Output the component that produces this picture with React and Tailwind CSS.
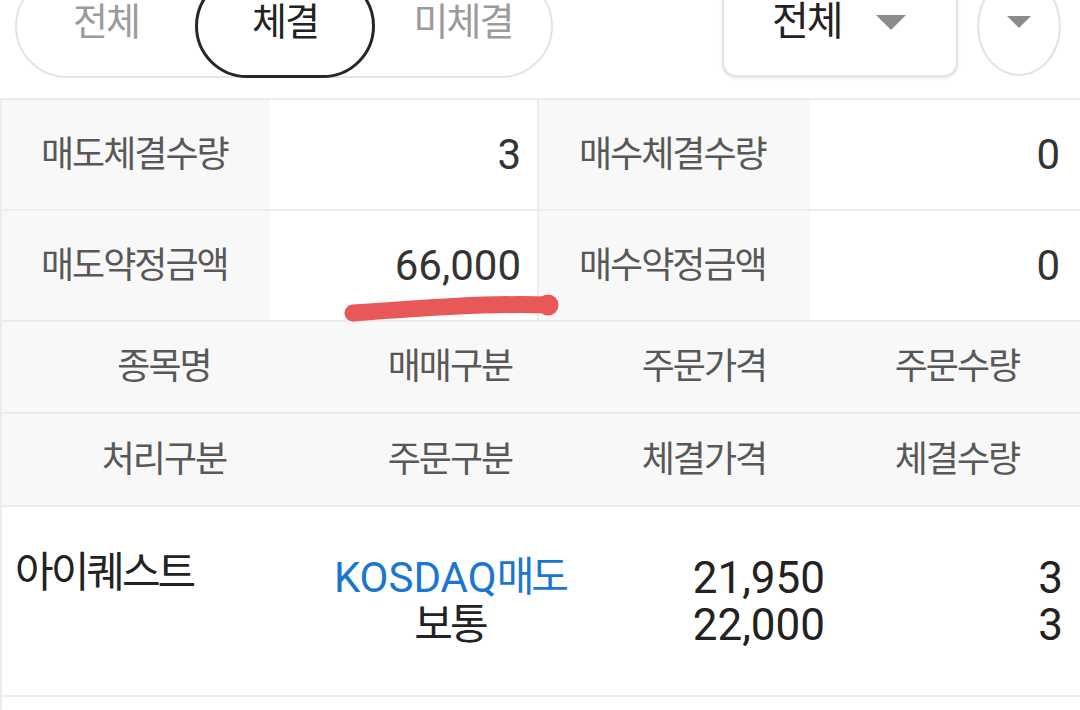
export default function App() {
  return (
    <div className="relative w-[1080px] h-[710px] overflow-hidden bg-white font-['Roboto','Noto_Sans_CJK_KR',sans-serif]">
      {/* Filter bar */}
      <div className="flex items-start h-[98px] overflow-hidden">
        <div className="ml-[15px] mt-[-26px] flex h-[104px] w-[538px] rounded-full border-2 border-[#e4e4e4]">
          <div className="flex w-[178px] items-center justify-center pb-[8px] text-[38px] leading-none tracking-[-2px] text-[#9b9b9b]">전체</div>
          <div className="-mt-[2px] flex h-[104px] w-[180px] items-center justify-center self-start rounded-full border-[3px] border-[#262626] pb-[8px] text-[38px] leading-none tracking-[-2px] text-[#222]">체결</div>
          <div className="flex w-[176px] items-center justify-center pb-[8px] text-[38px] leading-none tracking-[-2px] text-[#9b9b9b]">미체결</div>
        </div>

        <div className="ml-[169px] mt-[-23px] flex h-[100px] w-[236px] items-center rounded-[14px] border-2 border-[#e2e2e2] pb-[10px] pl-[48px] shadow-[0_1px_3px_rgba(0,0,0,0.12)]">
          <span className="text-[40px] leading-none tracking-[-2px] text-[#222]">전체</span>
          <svg className="ml-[34px]" width="30" height="15" viewBox="0 0 30 15">
            <polygon points="0,0 30,0 15,15" fill="#8c8c8c" />
          </svg>
        </div>

        <div className="ml-[19px] mt-[-24px] flex h-[100px] w-[84px] items-center justify-center rounded-[50%] border-2 border-[#e2e2e2] pb-[8px]">
          <svg width="24" height="12" viewBox="0 0 24 12">
            <polygon points="0,0 24,0 12,12" fill="#8c8c8c" />
          </svg>
        </div>
      </div>

      {/* Summary */}
      <div className="border-t-2 border-l-2 border-[#ececec]">
        <div className="grid grid-cols-[268px_267px_273px_270px] border-b-2 border-[#ececec]">
          <div className="flex h-[109px] items-center bg-[#f8f8f8] pl-[39px] text-[36px] leading-none tracking-[-2px] text-[#585858]">매도체결수량</div>
          <div className="flex h-[109px] items-center justify-end pr-[16px] text-[42px] leading-none text-[#333]">3</div>
          <div className="flex h-[109px] items-center border-l-2 border-[#ececec] bg-[#f8f8f8] pl-[40px] text-[36px] leading-none tracking-[-2px] text-[#585858]">매수체결수량</div>
          <div className="flex h-[109px] items-center justify-end pr-[20px] text-[42px] leading-none text-[#333]">0</div>
        </div>
        <div className="grid grid-cols-[268px_267px_273px_270px] border-b-2 border-[#ececec]">
          <div className="flex h-[109px] items-center bg-[#f8f8f8] pl-[39px] text-[36px] leading-none tracking-[-2px] text-[#585858]">매도약정금액</div>
          <div className="flex h-[109px] items-center justify-end pr-[16px] text-[42px] leading-none text-[#333]">66,000</div>
          <div className="flex h-[109px] items-center border-l-2 border-[#ececec] bg-[#f8f8f8] pl-[40px] text-[36px] leading-none tracking-[-2px] text-[#585858]">매수약정금액</div>
          <div className="flex h-[109px] items-center justify-end pr-[20px] text-[42px] leading-none text-[#333]">0</div>
        </div>

        {/* Column headers */}
        <div className="grid h-[92px] grid-cols-[324px_248px_260px_246px] items-center border-b-2 border-[#ececec] bg-[#f8f8f8] text-center text-[36px] leading-none tracking-[-2px] text-[#585858]">
          <div>종목명</div>
          <div>매매구분</div>
          <div>주문가격</div>
          <div>주문수량</div>
        </div>
        <div className="grid h-[93px] grid-cols-[324px_248px_260px_246px] items-center border-b-2 border-[#ececec] bg-[#f8f8f8] text-center text-[36px] leading-none tracking-[-2px] text-[#585858]">
          <div>처리구분</div>
          <div>주문구분</div>
          <div>체결가격</div>
          <div>체결수량</div>
        </div>

        {/* Order row */}
        <div className="grid h-[190px] grid-cols-[324px_248px_260px_246px] items-center border-b-2 border-[#ececec] text-[#222]">
          <div className="flex flex-col pb-[10px] pl-[13px]">
            <div className="flex h-[47px] items-center text-[42px] leading-none tracking-[-3px]">아이퀘스트</div>
            <div className="h-[47px]" />
          </div>
          <div className="flex flex-col items-center">
            <div className="flex h-[47px] items-center leading-none text-[#1976d2]">
              <span className="text-[42px]">KOSDAQ</span>
              <span className="text-[41px] tracking-[-3px]">매도</span>
            </div>
            <div className="flex h-[47px] items-center text-[42px] leading-none tracking-[-3px]">보통</div>
          </div>
          <div className="flex flex-col items-end pr-[9px] text-[44px] leading-none">
            <div className="flex h-[47px] items-center">21,950</div>
            <div className="flex h-[47px] items-center">22,000</div>
          </div>
          <div className="flex flex-col items-end pr-[17px] text-[44px] leading-none">
            <div className="flex h-[47px] items-center">3</div>
            <div className="flex h-[47px] items-center">3</div>
          </div>
        </div>
        <div className="h-[20px]" />
      </div>

      {/* Hand-drawn highlight */}
      <svg className="pointer-events-none absolute left-0 top-0" width="1080" height="710" viewBox="0 0 1080 710">
        <path d="M353 313 C 420 308, 490 303, 549 305" stroke="#e95858" strokeWidth="17" strokeLinecap="round" fill="none" />
        <circle cx="548" cy="305" r="10.5" fill="#e95858" />
      </svg>
    </div>
  );
}
